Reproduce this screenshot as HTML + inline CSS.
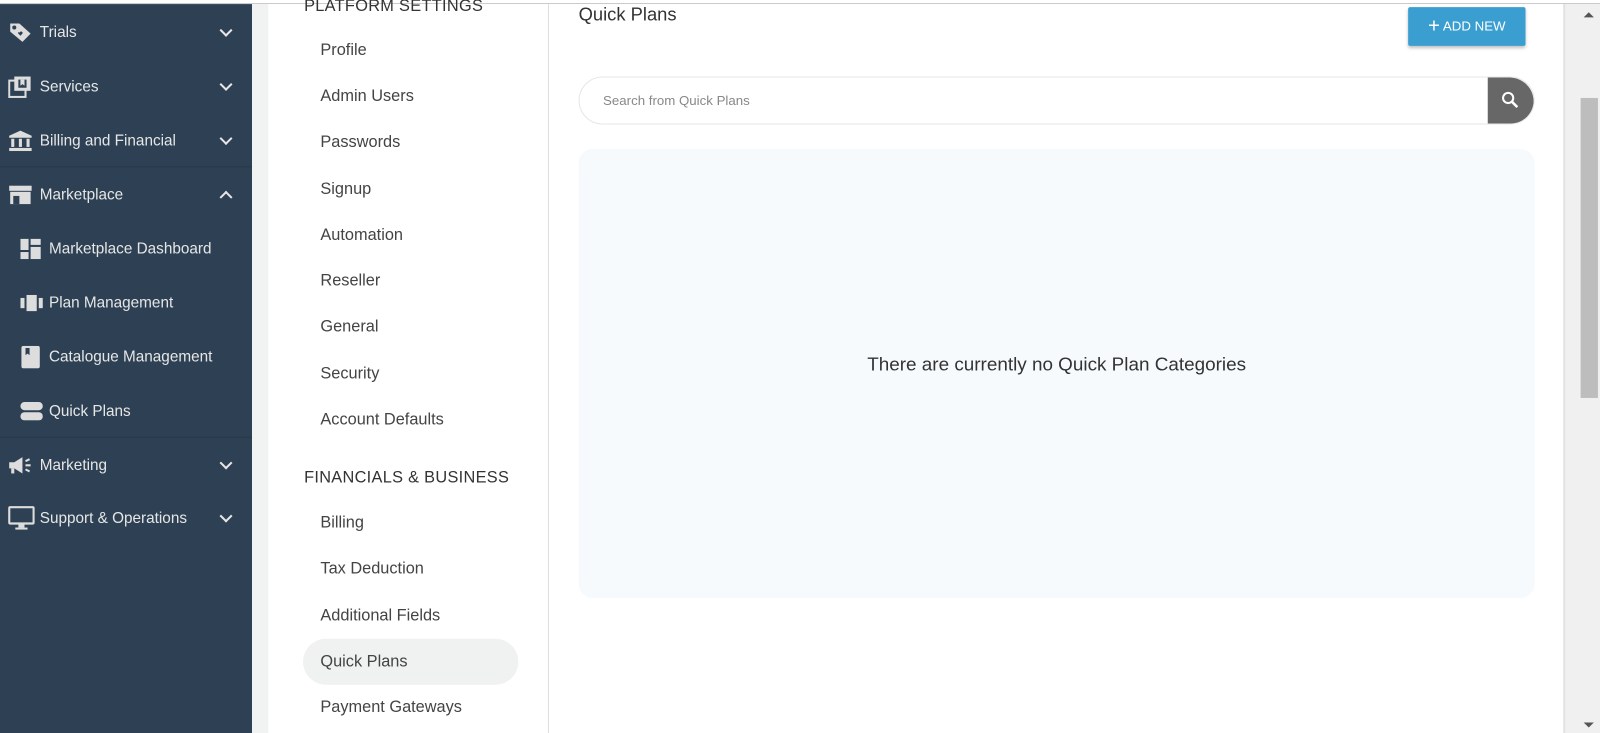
<!DOCTYPE html>
<html><head><meta charset="utf-8"><style>
*{margin:0;padding:0;box-sizing:border-box}
html,body{width:1600px;height:733px;overflow:hidden;background:#fff}
body{font-family:"Liberation Sans",sans-serif;position:relative}
#w{position:absolute;left:0;top:0;width:1568px;height:720px;transform:scale(1.0204);transform-origin:0 0}
.top{position:absolute;left:0;top:0;width:1568px;height:4px;background:#fff;border-bottom:1px solid #c8c8c8}
.side{position:absolute;left:0;top:4px;width:247px;height:729px;background:#2e4154}
.item{position:absolute;left:0;width:247px;height:52px;color:#e6e6e6;font-size:15px}
.item .ic{position:absolute;left:8px;top:50%;transform:translateY(-50%)}
.item .tx{position:absolute;left:39px;top:50%;transform:translateY(-50%)}
.item.sub .tx{left:48px}
.item.sub .ic{left:20px}
.chev{position:absolute;left:217px;top:50%;width:9px;height:9px;border-right:2.5px solid #e6e6e6;border-bottom:2.5px solid #e6e6e6;transform:translateY(-75%) rotate(45deg)}
.chev.up{transform:translateY(-25%) rotate(-135deg)}
.sep{position:absolute;left:0;width:247px;height:1px;background:#26384a}
.gap{position:absolute;left:247px;top:4px;width:16px;height:729px;background:#f1f2f2}
.set{position:absolute;left:263px;top:4px;width:275px;height:729px;background:#fff;border-right:1px solid #ddd}
.set .h{position:absolute;left:35px;font-size:16px;color:#333;letter-spacing:.3px}
.set .l{position:absolute;left:51px;font-size:16px;color:#444}
.sel{position:absolute;left:34px;top:622px;width:211px;height:45px;border-radius:23px;background:#f0f1f1}
.main{position:absolute;left:538px;top:4px;width:994px;height:729px;background:#fff}
.gray{position:absolute;left:1532px;top:4px;width:16px;height:729px;background:#f0f0f0;border-left:2px solid #e2e2e2}
.track{position:absolute;left:1548px;top:4px;width:20px;height:729px;background:#f0f0f0}
.thumb{position:absolute;left:1549px;top:96px;width:17px;height:294px;background:#bdbdbd}
</style></head><body><div id="w">
<div class="top"></div>
<div class="side">
 <div class="item" style="top:2px"><svg class="ic" width="24" height="22" viewBox="0 0 24 22"><path d="M2 2h9l11 10-8 8L2 10z" fill="#ddd"/><circle cx="6" cy="6" r="2" fill="#2e4154"/><path d="M11 11c1-2 4-1 3 1l-2 2-2-2c-1-1 0-2 1-1z" fill="#2e4154"/></svg><span class="tx">Trials</span><span class="chev"></span></div>
 <div class="item" style="top:55px"><svg class="ic" width="24" height="22" viewBox="0 0 24 22"><rect x="1" y="5" width="16" height="16" fill="none" stroke="#ddd" stroke-width="2"/><rect x="6" y="1" width="16" height="14" fill="#ddd"/><rect x="10" y="4" width="8" height="8" fill="#2e4154"/><path d="M12 4h4v6l-2-1.5-2 1.5z" fill="#ddd"/></svg><span class="tx">Services</span><span class="chev"></span></div>
 <div class="item" style="top:108px"><svg class="ic" width="24" height="22" viewBox="0 0 24 22"><path d="M12 1L1 6v2h22V6z" fill="#ddd"/><rect x="3" y="9" width="3" height="8" fill="#ddd"/><rect x="10.5" y="9" width="3" height="8" fill="#ddd"/><rect x="18" y="9" width="3" height="8" fill="#ddd"/><rect x="1" y="18" width="22" height="3" fill="#ddd"/></svg><span class="tx">Billing and Financial</span><span class="chev"></span></div>
 <div class="sep" style="top:159px"></div>
 <div class="item" style="top:161px"><svg class="ic" width="24" height="20" viewBox="0 0 24 20"><rect x="1" y="1" width="22" height="5" fill="#ddd"/><rect x="2" y="7" width="20" height="12" fill="#ddd"/><rect x="5" y="11" width="6" height="8" fill="#2e4154"/></svg><span class="tx">Marketplace</span><span class="chev up"></span></div>
 <div class="item sub" style="top:214px"><svg class="ic" width="20" height="20" viewBox="0 0 20 20"><rect x="0" y="0" width="8" height="11" fill="#ddd"/><rect x="10" y="0" width="10" height="6" fill="#ddd"/><rect x="0" y="13" width="8" height="7" fill="#ddd"/><rect x="10" y="8" width="10" height="12" fill="#ddd"/></svg><span class="tx">Marketplace Dashboard</span></div>
 <div class="item sub" style="top:267px"><svg class="ic" width="22" height="16" viewBox="0 0 22 16"><rect x="0" y="3" width="4" height="10" fill="#ddd"/><rect x="6" y="0" width="10" height="16" fill="#ddd"/><rect x="18" y="3" width="4" height="10" fill="#ddd"/></svg><span class="tx">Plan Management</span></div>
 <div class="item sub" style="top:320px"><svg class="ic" width="20" height="22" viewBox="0 0 20 22"><rect x="1" y="0" width="18" height="22" rx="2" fill="#ddd"/><path d="M5 2h4v7l-2-1.5L5 9z" fill="#2e4154"/></svg><span class="tx">Catalogue Management</span></div>
 <div class="item sub" style="top:373px"><svg class="ic" width="22" height="18" viewBox="0 0 22 18"><rect x="0" y="0" width="22" height="8" rx="4" fill="#ddd"/><rect x="0" y="10" width="22" height="8" rx="4" fill="#ddd"/></svg><span class="tx">Quick Plans</span></div>
 <div class="sep" style="top:424px"></div>
 <div class="item" style="top:426px"><svg class="ic" width="24" height="18" viewBox="0 0 24 18"><path d="M1 6h5l8-5v16l-8-5H1z" fill="#ddd"/><rect x="3" y="12" width="3" height="5" fill="#ddd"/><path d="M17 5l4-2M17 9h5M17 13l4 2" stroke="#ddd" stroke-width="2"/></svg><span class="tx">Marketing</span><span class="chev"></span></div>
 <div class="item" style="top:478px"><svg class="ic" width="26" height="24" viewBox="0 0 26 24"><rect x="1" y="1" width="24" height="16" rx="1" fill="none" stroke="#ddd" stroke-width="2.2"/><rect x="10" y="17" width="6" height="4" fill="#ddd"/><rect x="7" y="21" width="12" height="2" fill="#ddd"/></svg><span class="tx">Support &amp; Operations</span><span class="chev"></span></div>
</div>
<div class="gap"></div>
<div class="set">
 <div class="h" style="top:-6px">PLATFORM SETTINGS</div>
 <div class="l" style="top:37px">Profile</div>
 <div class="l" style="top:82px">Admin Users</div>
 <div class="l" style="top:127px">Passwords</div>
 <div class="l" style="top:173px">Signup</div>
 <div class="l" style="top:218px">Automation</div>
 <div class="l" style="top:263px">Reseller</div>
 <div class="l" style="top:308px">General</div>
 <div class="l" style="top:354px">Security</div>
 <div class="l" style="top:399px">Account Defaults</div>
 <div class="h" style="top:456px">FINANCIALS &amp; BUSINESS</div>
 <div class="l" style="top:500px">Billing</div>
 <div class="l" style="top:545px">Tax Deduction</div>
 <div class="sel"></div>
 <div class="l" style="top:591px">Additional Fields</div>
 <div class="l" style="top:636px">Quick Plans</div>
 <div class="l" style="top:681px">Payment Gateways</div>
</div>
<div class="main">
 <div style="position:absolute;left:29px;top:0;font-size:18px;color:#333">Quick Plans</div>
 <div style="position:absolute;left:842px;top:3px;width:115px;height:38px;background:#3a9fd0;border-radius:2px;box-shadow:0 2px 3px rgba(0,0,0,.25);color:#fff;font-size:13px;line-height:38px;text-align:center"><span style="font-size:20px;vertical-align:-2px">+</span> ADD NEW</div>
 <div style="position:absolute;left:29px;top:71px;width:937px;height:47px;border:1px solid #e6e6e6;border-radius:24px;overflow:hidden">
  <span style="position:absolute;left:23px;top:15px;font-size:13px;color:#888">Search from Quick Plans</span>
  <div style="position:absolute;right:0;top:0;width:45px;height:47px;background:#676767;border-radius:0 24px 24px 0"><svg width="45" height="45" viewBox="0 0 45 45"><circle cx="20" cy="20" r="5" fill="none" stroke="#fff" stroke-width="2"/><path d="M24 24l5 5" stroke="#fff" stroke-width="2.5"/></svg></div>
 </div>
 <div style="position:absolute;left:29px;top:142px;width:937px;height:440px;background:#f6fafd;border-radius:14px">
  <div style="position:absolute;left:0;right:0;top:200px;text-align:center;font-size:18.5px;color:#333">There are currently no Quick Plan Categories</div>
 </div>
</div>
<div class="gray"></div>
<div class="track"></div>
<div class="thumb"></div>
<div style="position:absolute;left:1552px;top:12px;border:5px solid transparent;border-bottom:5px solid #555;border-top:0"></div>
<div style="position:absolute;left:1552px;top:708px;border:5px solid transparent;border-top:5px solid #555;border-bottom:0"></div>
</div></body></html>
